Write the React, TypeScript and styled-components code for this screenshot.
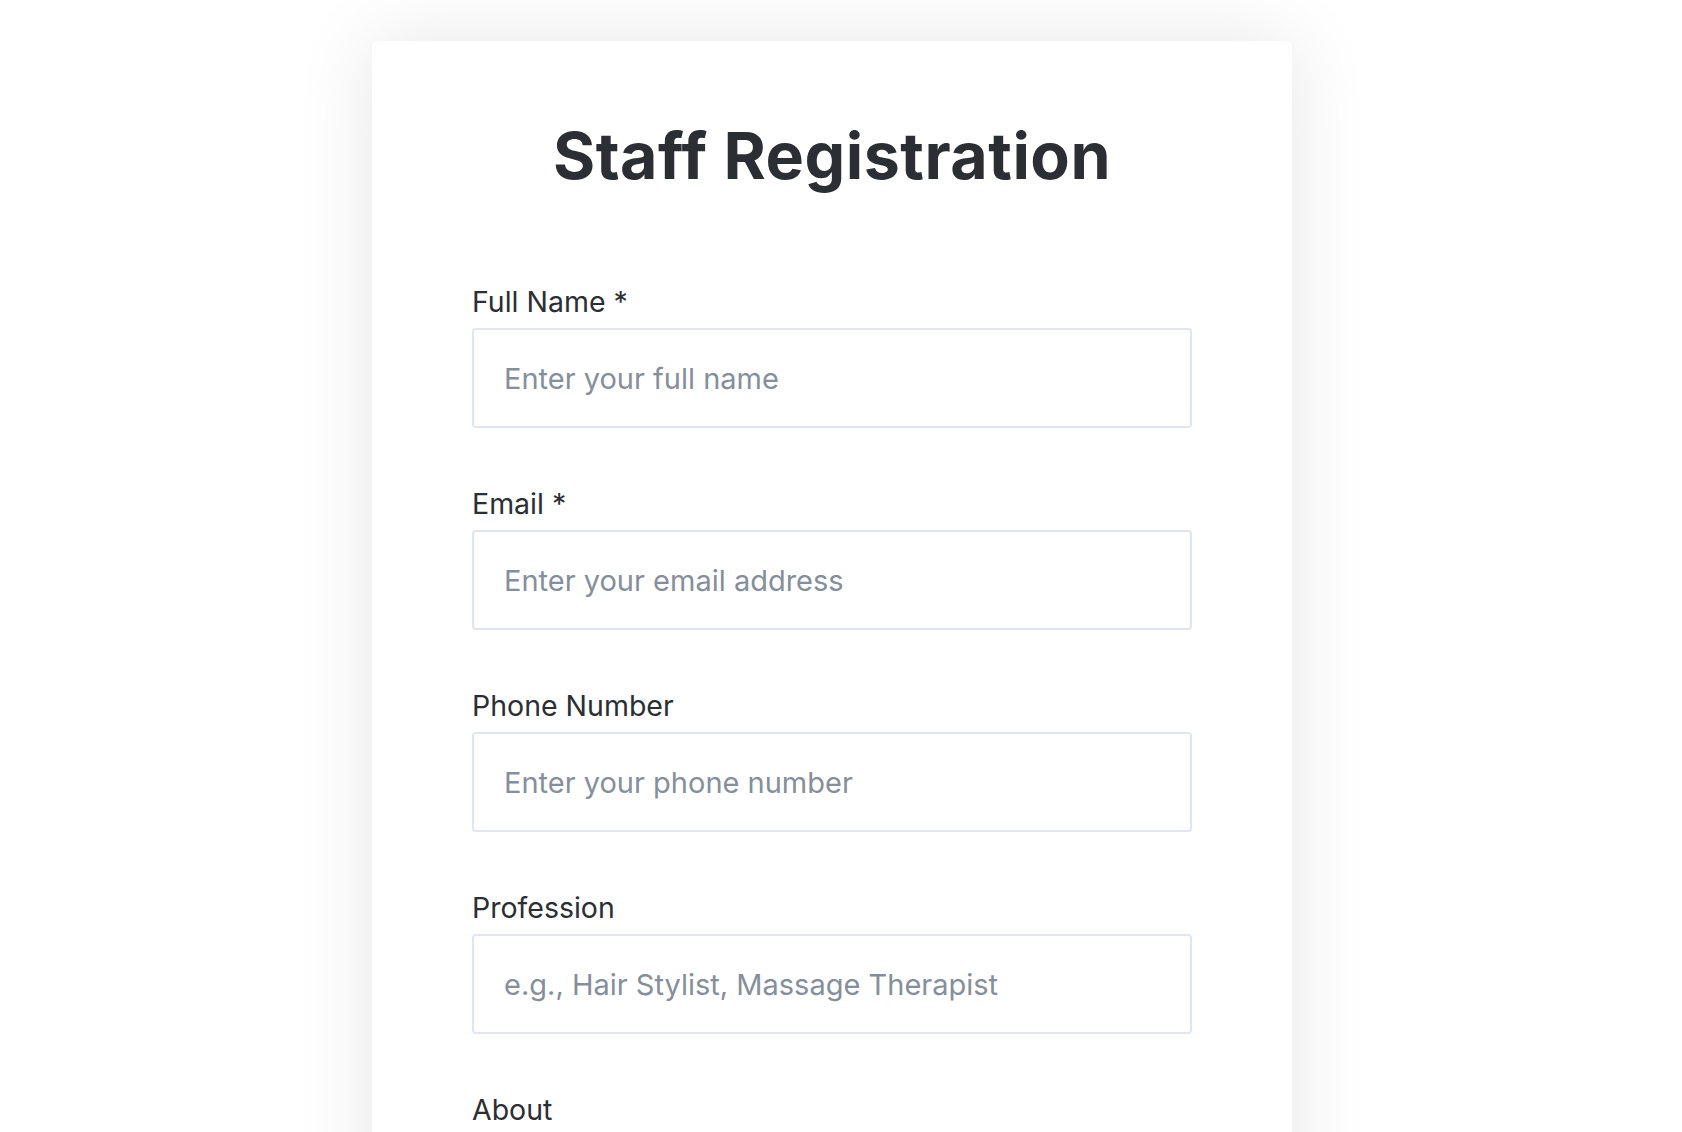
import React from 'react'
import styled, { createGlobalStyle } from 'styled-components'

const GlobalStyle = createGlobalStyle`
  html, body {
    margin: 0;
    padding: 0;
    background: #ffffff;
  }
  body {
    font-family: 'Inter', 'Open Sans', sans-serif;
    color: #2b2e33;
  }
`

interface Field {
  id: string
  label: string
  placeholder: string
  type?: string
  multiline?: boolean
}

const fields: Field[] = [
  { id: 'fullName', label: 'Full Name *', placeholder: 'Enter your full name' },
  { id: 'email', label: 'Email *', placeholder: 'Enter your email address', type: 'email' },
  { id: 'phone', label: 'Phone Number', placeholder: 'Enter your phone number', type: 'tel' },
  { id: 'profession', label: 'Profession', placeholder: 'e.g., Hair Stylist, Massage Therapist' },
  { id: 'about', label: 'About', placeholder: 'Tell us a little about yourself', multiline: true },
]

function App() {
  return (
    <>
      <GlobalStyle />
      <Page>
        <Card>
          <Title>Staff Registration</Title>
          <Form onSubmit={(e) => e.preventDefault()}>
            {fields.map((f) => (
              <FieldGroup key={f.id}>
                <Label htmlFor={f.id}>{f.label}</Label>
                {f.multiline ? (
                  <TextArea id={f.id} placeholder={f.placeholder} rows={4} />
                ) : (
                  <Input id={f.id} type={f.type ?? 'text'} placeholder={f.placeholder} />
                )}
              </FieldGroup>
            ))}
          </Form>
        </Card>
      </Page>
    </>
  )
}

// right padding stands in for the scrollbar gutter of the original page
const Page = styled.div`
  display: flex;
  justify-content: center;
  padding: 41px 18px 80px 0;
`

const Card = styled.div`
  width: 920px;
  box-sizing: border-box;
  background: #ffffff;
  border-radius: 6px;
  box-shadow: 0 0 80px rgba(0, 0, 0, 0.1);
  padding: 77px 100px 80px;
`

const Title = styled.h1`
  margin: 0 0 87px;
  text-align: center;
  font-size: 64.5px;
  font-weight: 700;
  line-height: 1.2;
  letter-spacing: 0.5px;
  color: #2b2e33;
`

const Form = styled.form`
  display: flex;
  flex-direction: column;
  gap: 56px;
`

const FieldGroup = styled.div`
  display: flex;
  flex-direction: column;
  gap: 6px;
`

const Label = styled.label`
  font-size: 28.5px;
  line-height: 40px;
  font-weight: 400;
  color: #2b2e33;
`

const inputBase = `
  box-sizing: border-box;
  width: 100%;
  border: 2px solid #e2e6ee;
  border-radius: 4px;
  background: #ffffff;
  font-family: 'Inter', 'Open Sans', sans-serif;
  font-size: 29px;
  color: #2b2e33;
  padding: 0 30px;
  outline: none;
  &::placeholder {
    color: #858f9b;
  }
`

const Input = styled.input`
  ${inputBase}
  height: 100px;
`

const TextArea = styled.textarea`
  ${inputBase}
  padding: 28px 30px;
  resize: vertical;
`

export default App
